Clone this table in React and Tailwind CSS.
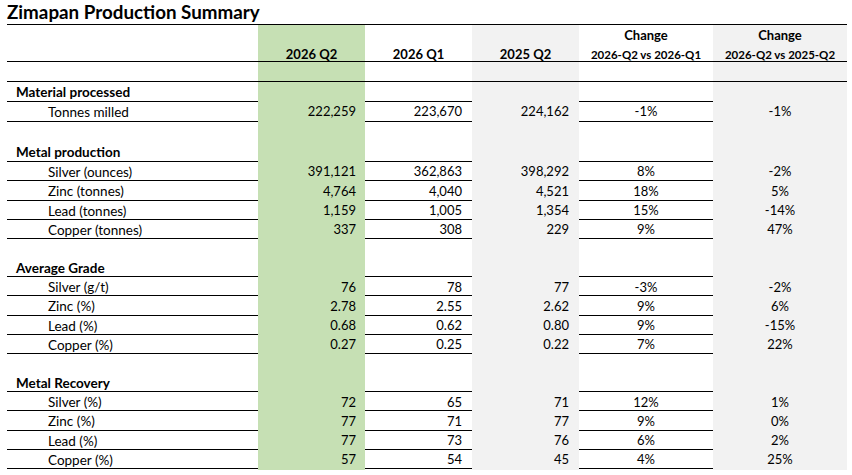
const sections = [
  {
    title: "Material processed",
    first: true,
    rows: [["Tonnes milled", "222,259", "223,670", "224,162", "-1%", "-1%"]],
  },
  {
    title: "Metal production",
    rows: [
      ["Silver (ounces)", "391,121", "362,863", "398,292", "8%", "-2%"],
      ["Zinc (tonnes)", "4,764", "4,040", "4,521", "18%", "5%"],
      ["Lead (tonnes)", "1,159", "1,005", "1,354", "15%", "-14%"],
      ["Copper (tonnes)", "337", "308", "229", "9%", "47%"],
    ],
  },
  {
    title: "Average Grade",
    rows: [
      ["Silver (g/t)", "76", "78", "77", "-3%", "-2%"],
      ["Zinc (%)", "2.78", "2.55", "2.62", "9%", "6%"],
      ["Lead (%)", "0.68", "0.62", "0.80", "9%", "-15%"],
      ["Copper (%)", "0.27", "0.25", "0.22", "7%", "22%"],
    ],
  },
  {
    title: "Metal Recovery",
    rows: [
      ["Silver (%)", "72", "65", "71", "12%", "1%"],
      ["Zinc (%)", "77", "71", "77", "9%", "0%"],
      ["Lead (%)", "77", "73", "76", "6%", "2%"],
      ["Copper (%)", "57", "54", "45", "4%", "25%"],
    ],
  },
];

const cols = "grid grid-cols-[251px_107px_107px_107px_134px_134px]";

// row heights drift a little in the screenshot (scaled sheet), first sections sit taller
function rowH(i) {
  if (i < 5) return "h-[20px]";
  if (i < 9) return "h-[19.25px]";
  return "h-[19.17px]";
}

function Row({ idx, border, children }) {
  return (
    <div className={`${cols} ${rowH(idx)} ${border ? "border-b border-black" : ""}`}>
      {children}
    </div>
  );
}

export default function App() {
  let idx = 0;
  const body = [];
  sections.forEach((s) => {
    body.push(
      <Row key={s.title + "-gap"} idx={idx++} border={s.first}>
        <div />
        <div className="bg-[#c6e0b4]" />
        <div />
        <div className="bg-[#f2f2f2]" />
        <div />
        <div className="bg-[#f2f2f2]" />
      </Row>
    );
    body.push(
      <Row key={s.title} idx={idx++} border>
        <div className="pl-[9px] font-bold text-[13.5px] flex items-center">{s.title}</div>
        <div className="bg-[#c6e0b4]" />
        <div />
        <div className="bg-[#f2f2f2]" />
        <div />
        <div className="bg-[#f2f2f2]" />
      </Row>
    );
    s.rows.forEach((r) => {
      body.push(
        <Row key={s.title + r[0]} idx={idx++} border>
          <div className="pl-[41px] text-[13.5px] flex items-center">{r[0]}</div>
          <div className="bg-[#c6e0b4] flex items-center justify-end pr-[9px]">{r[1]}</div>
          <div className="flex items-center justify-end pr-[10px]">{r[2]}</div>
          <div className="bg-[#f2f2f2] flex items-center justify-end pr-[10px]">{r[3]}</div>
          <div className="flex items-center justify-center">{r[4]}</div>
          <div className="bg-[#f2f2f2] flex items-center justify-center">{r[5]}</div>
        </Row>
      );
    });
  });

  return (
    <div
      className="bg-white w-[852px] h-[475px] text-[13px] text-black"
      style={{ fontFamily: "Lato, 'Liberation Sans', sans-serif" }}
    >
      <div className="ml-[7px] w-[840px]">
        {/* Title */}
        <div className="h-[25px] border-b border-black flex items-end pb-[2px]">
          <span className="text-[18.8px] font-bold leading-none">Zimapan Production Summary</span>
        </div>

        {/* Header */}
        <div className={`${cols} h-[37px] border-b border-black font-bold leading-[13px]`}>
          <div />
          <div className="bg-[#c6e0b4] flex items-end justify-center">2026 Q2</div>
          <div className="flex items-end justify-center">2026 Q1</div>
          <div className="bg-[#f2f2f2] flex items-end justify-center">2025 Q2</div>
          <div className="flex flex-col items-center justify-end">
            <span className="leading-[20px] mb-[3px]">Change</span>
            <span className="text-[11.5px] leading-[13px]">2026-Q2 vs 2026-Q1</span>
          </div>
          <div className="bg-[#f2f2f2] flex flex-col items-center justify-end">
            <span className="leading-[20px] mb-[3px]">Change</span>
            <span className="text-[11.5px] leading-[13px]">2026-Q2 vs 2025-Q2</span>
          </div>
        </div>

        {body}
      </div>
    </div>
  );
}
